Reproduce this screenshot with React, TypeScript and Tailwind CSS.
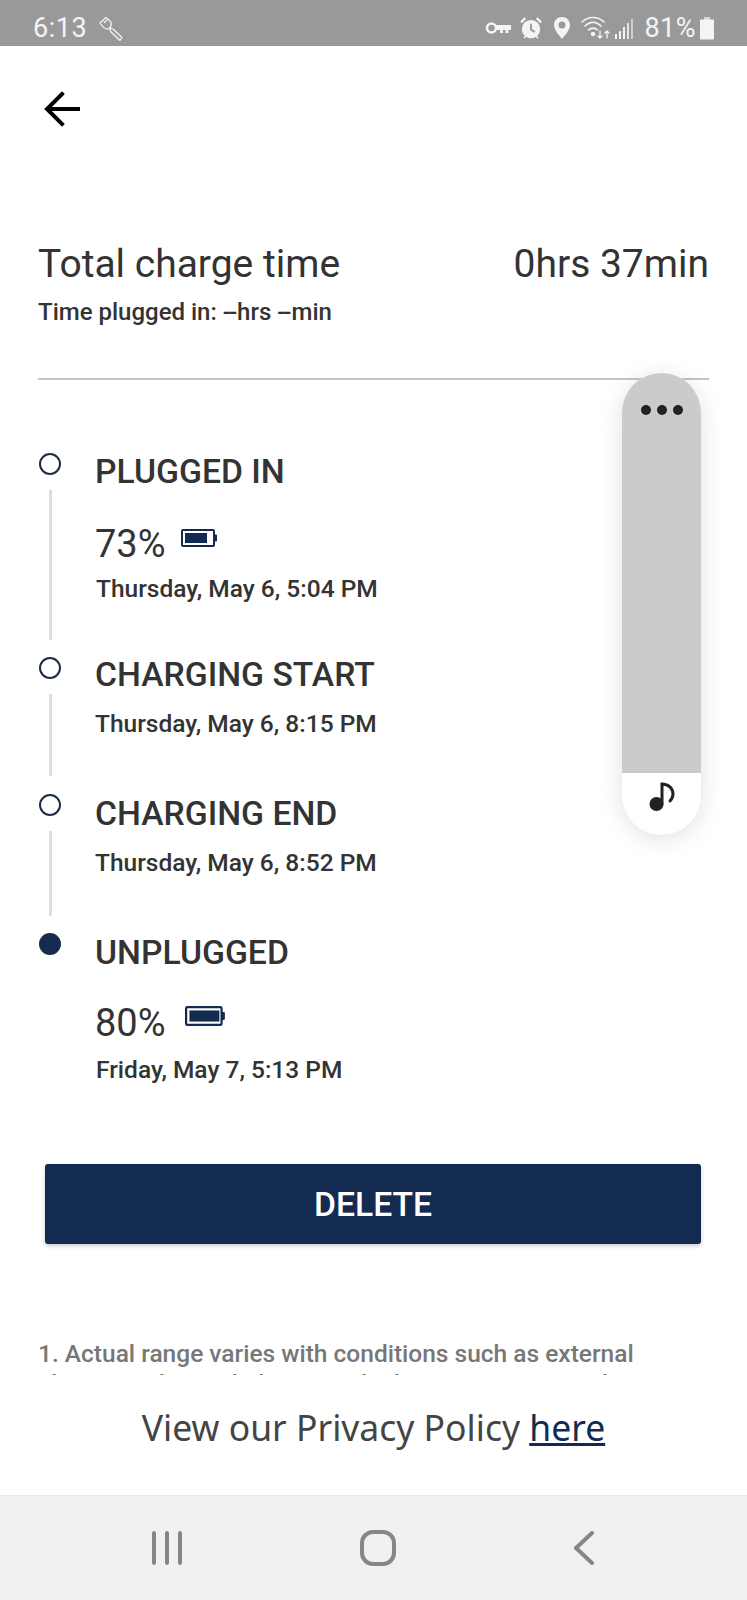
const font = "font-['Roboto',sans-serif]";

function Battery({ w, h, fill }: { w: number; h: number; fill: number }) {
  return (
    <svg width={w} height={h} viewBox="0 0 37 18" fill="none">
      <rect x="1" y="1" width="32" height="16" rx="1" fill="#fff" stroke="#132b50" strokeWidth="2" />
      <rect x="4" y="4" width={fill} height="10" fill="#132b50" />
      <rect x="33" y="5.5" width="3" height="7" rx="1" fill="#132b50" />
    </svg>
  );
}

function StatusBar() {
  return (
    <div className="h-[46px] bg-[#999999] flex items-center pl-[33px] pr-[32px] text-[#f4f4f4]">
      <span className="text-[27px] leading-none tracking-[0.5px] mt-[10px]">6:13</span>
      <svg className="ml-[11px] mt-[11px]" width="26" height="26" viewBox="0 0 26 26" fill="none" stroke="#f4f4f4" strokeWidth="1.3" strokeLinejoin="round">
        <path d="M2 7 L8 1.5 L13 6 C13.5 9 12.5 12 10 13 C7 13.5 4 10 2 7 Z" />
        <path d="M6 7 L9 4" />
        <path d="M11.5 12 L15 13 L24 21.5 L22 24.5 L13 16 Z" />
      </svg>
      <div className="ml-auto flex items-center mt-[10px]">
        {/* key */}
        <svg width="27" height="16" viewBox="0 0 27 16" fill="none">
          <circle cx="6.5" cy="8" r="4.5" stroke="#f4f4f4" strokeWidth="2.6" />
          <path d="M11 5 H26 V10 H23.5 V13 H20.5 V10 H18 V13 H15 V10 H11 Z" fill="#f4f4f4" />
        </svg>
        {/* alarm */}
        <svg className="ml-[6px]" width="26" height="26" viewBox="0 0 24 24" fill="#f4f4f4">
          <circle cx="12" cy="13" r="8.5" />
          <path d="M2 6 L6 2 L7.5 3.5 L3.5 7.5 Z M22 6 L18 2 L16.5 3.5 L20.5 7.5 Z M5 21 L7 18.5 L8 19.5 L6 22 Z M19 21 L17 18.5 L16 19.5 L18 22 Z" />
          <path d="M12 8 V13.5 L15.5 15.5" stroke="#999999" strokeWidth="1.8" fill="none" />
        </svg>
        {/* location */}
        <svg className="ml-[9px]" width="18" height="24" viewBox="0 0 18 24">
          <path fillRule="evenodd" fill="#f4f4f4" d="M9 1 C4.5 1 1 4.5 1 9 C1 14 6 19 9 23 C12 19 17 14 17 9 C17 4.5 13.5 1 9 1 Z M9 5.5 A3.5 3.5 0 1 1 9 12.5 A3.5 3.5 0 1 1 9 5.5 Z" />
        </svg>
        {/* wifi */}
        <svg className="ml-[10px]" width="30" height="26" viewBox="0 0 30 26" fill="none" stroke="#f4f4f4" strokeWidth="1.6" strokeLinecap="round">
          <path d="M1 7 C7 1 17 1 23 7" />
          <path d="M4 11 C9 6 15 6 20 11" />
          <path d="M7.5 15 C10 12.5 14 12.5 16.5 15" />
          <circle cx="12" cy="19" r="1.4" fill="#f4f4f4" />
          <path d="M19 16 V23 M17 21 L19 23 L21 21 M26 23 V16 M24 18 L26 16 L28 18" strokeWidth="1.3" />
        </svg>
        {/* signal */}
        <svg className="ml-[3px]" width="20" height="24" viewBox="0 0 20 24" fill="#f4f4f4">
          <rect x="1" y="18" width="2" height="5" />
          <rect x="5" y="15" width="2" height="8" />
          <rect x="9" y="11" width="2" height="12" />
          <rect x="13" y="7" width="2" height="16" opacity="0.85" />
          <rect x="17" y="3" width="2" height="20" opacity="0.6" />
        </svg>
        <span className="ml-[10px] text-[27px] leading-none tracking-[0.5px]">81%</span>
        <svg className="ml-[3px]" width="16" height="23" viewBox="0 0 16 23" fill="#f4f4f4">
          <rect x="5" y="0" width="6" height="3" opacity="0.7" />
          <rect x="1" y="2.5" width="14" height="20" rx="1" />
        </svg>
      </div>
    </div>
  );
}

function Step({
  height,
  filled,
  line,
  children,
}: {
  height: string;
  filled?: boolean;
  line?: string;
  children: React.ReactNode;
}) {
  return (
    <div className={`flex ${height}`}>
      <div className="w-[22px] flex flex-col items-center shrink-0">
        <div className={`w-[22px] h-[22px] rounded-full border-2 border-[#1c2c48] ${filled ? "bg-[#132b50]" : "bg-white"}`} />
        {line && <div className={`w-[3px] bg-[#dedede] mt-[15px] ${line}`} />}
      </div>
      <div className="ml-[34px] grow">{children}</div>
    </div>
  );
}

export default function App() {
  return (
    <div className={`${font} relative w-[747px] h-[1600px] bg-white overflow-hidden flex flex-col text-[#333333]`}>
      <StatusBar />

      <div className="pl-[44px] pt-[45px]">
        <svg width="36" height="36" viewBox="0 0 36 36" fill="none" stroke="#000" strokeWidth="4" strokeLinecap="square">
          <path d="M34 18 H4" />
          <path d="M18 3 L3 18 L18 33" />
        </svg>
      </div>

      <div className="mx-[38px] mt-[115px] flex justify-between items-start">
        <div>
          <div className="text-[39px] leading-[44px]">Total charge time</div>
          <div className="text-[24px] leading-[28px] font-medium mt-[12px]">
            Time plugged in: <span className="tracking-[-2px]">-</span>-hrs <span className="tracking-[-2px]">-</span>-min
          </div>
        </div>
        <div className="text-[39px] leading-[44px]">0hrs 37min</div>
      </div>

      <div className="mx-[38px] mt-[52px] h-[2px] bg-[#c4c4c4]" />

      <div className="ml-[39px] mt-[73px] flex flex-col">
        <Step height="h-[204px]" line="h-[150px]">
          <div className="text-[33.7px] leading-[40px] font-medium -mt-[1px]">PLUGGED IN</div>
          <div className="flex items-start mt-[30px]">
            <span className="text-[38px] leading-[44px]">73%</span>
            <span className="ml-[15px] mt-[7px]"><Battery w={37} h={18} fill={22} /></span>
          </div>
          <div className="text-[24.5px] leading-[28px] font-medium ml-[1px] mt-[9px]">Thursday, May 6, 5:04 PM</div>
        </Step>
        <Step height="h-[137px]" line="h-[82px]">
          <div className="text-[33.7px] leading-[40px] font-medium -mt-[2px]">CHARGING START</div>
          <div className="text-[24.5px] leading-[28px] font-medium mt-[15px]">Thursday, May 6, 8:15 PM</div>
        </Step>
        <Step height="h-[139px]" line="h-[85px]">
          <div className="text-[33.7px] leading-[40px] font-medium">CHARGING END</div>
          <div className="text-[24.5px] leading-[28px] font-medium mt-[15px]">Thursday, May 6, 8:52 PM</div>
        </Step>
        <Step height="h-[231px]" filled>
          <div className="text-[33.7px] leading-[40px] font-medium">UNPLUGGED</div>
          <div className="flex items-start mt-[28px]">
            <span className="text-[38px] leading-[44px]">80%</span>
            <span className="ml-[19px] mt-[5px]"><Battery w={41} h={20} fill={27} /></span>
          </div>
          <div className="text-[24.5px] leading-[28px] font-medium ml-[1px] mt-[11px]">Friday, May 7, 5:13 PM</div>
        </Step>
      </div>

      <button className="mx-[45px] pt-[3px] h-[80px] w-[656px] shrink-0 rounded-[3px] bg-[#132b50] text-white text-[33.7px] font-medium shadow-[0_2px_4px_rgba(0,0,0,0.2)]">
        DELETE
      </button>

      <div className="mx-[38px] mt-[95px] h-[36px] overflow-hidden text-[24.5px] leading-[30px] font-medium text-[#777777]">
        <p>1. Actual range varies with conditions such as external elements, driving behavior, vehicle maintenance and</p>
      </div>

      <div className="mt-[30px] text-center font-['Noto_Sans',sans-serif] text-[35.5px] leading-[44px] text-[#444444]">
        View our Privacy Policy <span className="text-[#132b50] underline">here</span>
      </div>

      <div className="mt-auto h-[105px] bg-[#f1f1f1] border-t border-[#e8e8e8] flex items-center justify-between pl-[151px] pr-[152px]">
        <svg width="32" height="34" viewBox="0 0 32 34" fill="none" stroke="#868686" strokeWidth="4" strokeLinecap="round">
          <path d="M3 2 V32 M16 2 V32 M29 2 V32" />
        </svg>
        <svg width="36" height="36" viewBox="0 0 36 36" fill="none" stroke="#868686" strokeWidth="4">
          <rect x="2" y="2" width="32" height="32" rx="11" />
        </svg>
        <svg width="22" height="34" viewBox="0 0 22 34" fill="none" stroke="#868686" strokeWidth="4" strokeLinecap="round" strokeLinejoin="round">
          <path d="M19 2 L3 17 L19 32" />
        </svg>
      </div>

      {/* floating side panel */}
      <div className="absolute left-[622px] top-[373px] w-[79px] h-[462px] rounded-[40px] overflow-hidden bg-white shadow-[0_4px_24px_rgba(0,0,0,0.12)] flex flex-col">
        <div className="h-[400px] bg-[#cbcbcb] flex justify-center pt-[32px] gap-[6px]">
          <span className="w-[10px] h-[10px] rounded-full bg-[#222222]" />
          <span className="w-[10px] h-[10px] rounded-full bg-[#222222]" />
          <span className="w-[10px] h-[10px] rounded-full bg-[#222222]" />
        </div>
        <div className="flex justify-center pt-[8px]">
          <svg width="28" height="32" viewBox="0 0 28 32" fill="none">
            <circle cx="8.5" cy="23" r="7" fill="#222222" />
            <path d="M14 23 V3 C21 3 25 8 25 13 C25 16 24 18 22 20" stroke="#222222" strokeWidth="3" strokeLinecap="round" />
          </svg>
        </div>
      </div>
    </div>
  );
}
